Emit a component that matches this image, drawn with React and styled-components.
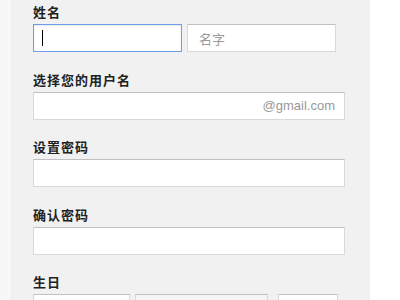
import React from "react";
import styled, { createGlobalStyle } from "styled-components";

const GlobalStyle = createGlobalStyle`
  html, body {
    margin: 0;
    padding: 0;
    background-color: #ffffff;
    font-family: "Liberation Sans", "Noto Sans CJK SC", sans-serif;
  }
`;

const Page = styled.div`
  width: 400px;
  height: 300px;
  display: flex;
  overflow: hidden;
`;

const Gutter = styled.div`
  width: 9px;
  background-color: #f7f7f7;
  border-right: 1px solid #fbfbfb;
`;

const Panel = styled.form`
  width: 360px;
  background-color: #f1f1f1;
  padding: 3px 0 0 23px;
  box-sizing: border-box;
  display: flex;
  flex-direction: column;
`;

const Group = styled.div`
  display: flex;
  flex-direction: column;
  gap: 3px;
  margin-bottom: 18.5px;
`;

const Label = styled.label`
  font-family: "Noto Sans CJK SC", sans-serif;
  font-size: 13px;
  font-weight: 700;
  letter-spacing: 1px;
  line-height: 18px;
  color: #222222;
`;

const Row = styled.div`
  display: flex;
  gap: 5px;
`;

const Field = styled.div`
  width: ${(props) => props.w}px;
  height: 28px;
  box-sizing: border-box;
  margin-left: ${(props) => props.offset || 0}px;
  background-color: ${(props) => (props.select ? "#f5f5f5" : "#ffffff")};
  border: 1px solid ${(props) => (props.focused ? "#6d9ee8" : "#d9d9d9")};
  border-top-color: ${(props) => (props.focused ? "#6d9ee8" : "#c0c0c0")};
  box-shadow: ${(props) =>
    props.focused ? "inset 0 1px 2px rgba(0, 0, 0, 0.1)" : "none"};
  display: flex;
  align-items: center;
  justify-content: ${(props) => (props.right ? "flex-end" : "flex-start")};
  padding: 0 9px 0 ${(props) => (props.focused ? 8 : 11)}px;
`;

const Caret = styled.span`
  width: 1px;
  height: 16px;
  background-color: #000000;
`;

const Hint = styled.span`
  font-family: ${(props) =>
    props.latin
      ? '"Liberation Sans", Arial, sans-serif'
      : '"Noto Sans CJK SC", sans-serif'};
  font-size: 13px;
  color: #999999;
`;

const App = () => {
  return (
    <Page>
      <GlobalStyle />
      <Gutter />
      <Panel>
        <Group>
          <Label>姓名</Label>
          <Row>
            <Field w={149} focused>
              <Caret />
            </Field>
            <Field w={149}>
              <Hint>名字</Hint>
            </Field>
          </Row>
        </Group>
        <Group>
          <Label>选择您的用户名</Label>
          <Field w={312} right>
            <Hint latin>@gmail.com</Hint>
          </Field>
        </Group>
        <Group>
          <Label>设置密码</Label>
          <Field w={312} />
        </Group>
        <Group>
          <Label>确认密码</Label>
          <Field w={312} />
        </Group>
        <Group>
          <Label>生日</Label>
          <Row>
            <Field w={97} />
            <Field w={133} select />
            <Field w={60} offset={5} />
          </Row>
        </Group>
      </Panel>
    </Page>
  );
};

export default App;
